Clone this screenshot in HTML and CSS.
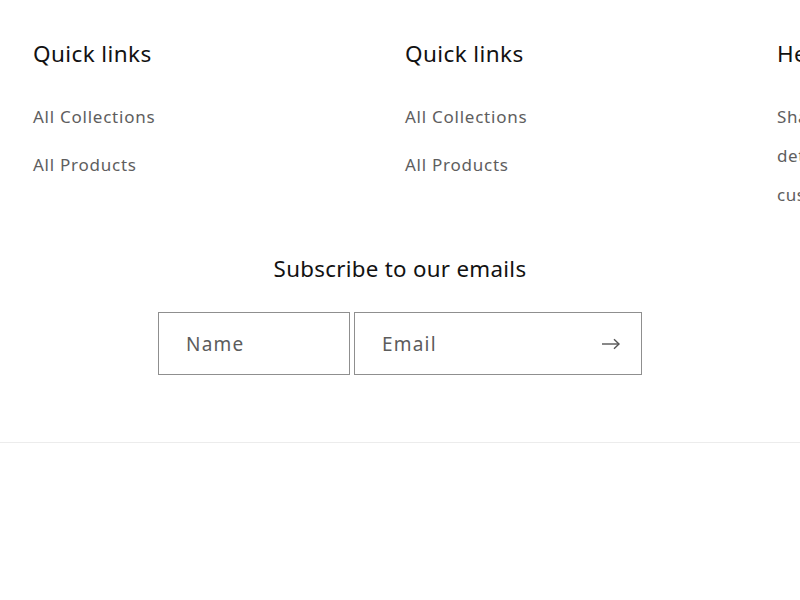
FILE: index.html
```html
<!DOCTYPE html>
<html lang="en">
<head>
<meta charset="utf-8">
<title>Footer</title>
<link rel="stylesheet" href="styles.css">
</head>
<body>
<footer class="footer">
  <div class="footer-blocks">
    <div class="block">
      <h2 class="block-title">Quick links</h2>
      <ul class="block-links">
        <li><a href="#">All Collections</a></li>
        <li><a href="#">All Products</a></li>
      </ul>
    </div>
    <div class="block">
      <h2 class="block-title">Quick links</h2>
      <ul class="block-links">
        <li><a href="#">All Collections</a></li>
        <li><a href="#">All Products</a></li>
      </ul>
    </div>
    <div class="block">
      <h2 class="block-title">Heading</h2>
      <p class="block-text">Share contact information, store details, and brand content with your customers.</p>
    </div>
  </div>
  <div class="newsletter">
    <h2 class="newsletter-title">Subscribe to our emails</h2>
    <form class="newsletter-form">
      <div class="field field-name"><span class="placeholder">Name</span></div>
      <div class="field field-email">
        <span class="placeholder">Email</span>
        <svg class="arrow" width="20" height="12" viewBox="0 0 20 12" fill="none" stroke="#555" stroke-width="1.4">
          <path d="M1 6h17"/>
          <path d="M13 1.2l5 4.8-5 4.8"/>
        </svg>
      </div>
    </form>
  </div>
  <div class="divider"></div>
</footer>
</body>
</html>
```
FILE: styles.css
```css
html, body {
  margin: 0;
  padding: 0;
  background: #fff;
  overflow: hidden;
  width: 800px;
  height: 600px;
}
body {
  font-family: "Noto Sans", "Open Sans", sans-serif;
  color: #121212;
}
.footer {
  padding-top: 36px;
}
.footer-blocks {
  display: flex;
  padding-left: 33px;
  width: 1200px;
}
.block {
  width: 372px;
  flex: none;
}
.block-title {
  margin: 0;
  font-size: 22.5px;
  font-weight: 400;
  line-height: 36px;
  letter-spacing: 0.4px;
  color: #121212;
}
.block-links {
  list-style: none;
  margin: 0;
  padding: 21px 0 0;
}
.block-links li {
  line-height: 48px;
  height: 48px;
}
.block-links a {
  font-size: 17px;
  letter-spacing: 0.75px;
  color: #5e5e5e;
  text-decoration: none;
}
.block-text {
  margin: 0;
  padding-top: 25px;
  width: 340px;
  font-size: 17px;
  line-height: 39px;
  letter-spacing: 0.6px;
  color: #5e5e5e;
}
.newsletter {
  display: flex;
  flex-direction: column;
  align-items: center;
  margin-top: 37px;
}
.newsletter-title {
  margin: 0;
  font-size: 22.3px;
  font-weight: 400;
  line-height: 36px;
  letter-spacing: 0.3px;
}
.newsletter-form {
  display: flex;
  gap: 4px;
  margin-top: 25px;
}
.field {
  box-sizing: border-box;
  height: 63px;
  border: 1px solid #8f8f8f;
  display: flex;
  align-items: center;
  font-size: 19px;
  letter-spacing: 1.2px;
  color: #5c5c5c;
}
.field-name {
  width: 192px;
  padding-left: 27px;
}
.field-email {
  width: 288px;
  padding-left: 27px;
  padding-right: 20px;
  justify-content: space-between;
}
.arrow {
  display: block;
}
.divider {
  margin-top: 67px;
  height: 1px;
  background: #ececec;
}
```
